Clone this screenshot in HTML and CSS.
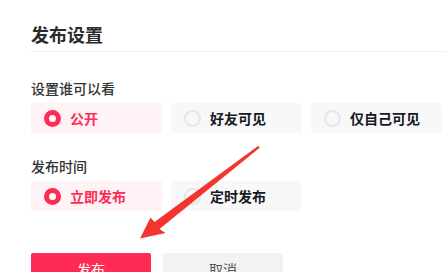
FILE: index.html
```html
<!DOCTYPE html>
<html lang="zh-CN">
<head>
    <meta charset="UTF-8">
    <meta name="viewport" content="width=device-width, initial-scale=1.0">
    <title>发布设置</title>
    <link rel="stylesheet" href="styles.css">
</head>
<body>
    <div class="page">
        <h2 class="title">发布设置</h2>

        <div class="section">
            <div class="label">设置谁可以看</div>
            <div class="options">
                <div class="option checked"><span class="radio"></span>公开</div>
                <div class="option"><span class="radio"></span>好友可见</div>
                <div class="option"><span class="radio"></span>仅自己可见</div>
            </div>
        </div>

        <div class="section">
            <div class="label">发布时间</div>
            <div class="options">
                <div class="option checked"><span class="radio"></span>立即发布</div>
                <div class="option"><span class="radio"></span>定时发布</div>
            </div>
        </div>

        <div class="actions">
            <button class="btn primary">发布</button>
            <button class="btn">取消</button>
        </div>

        <!-- 标注箭头 -->
        <svg class="arrow" width="446" height="272" viewBox="0 0 446 272">
            <polygon points="258,146 260,147.5 159.5,229 165.5,233 140,238.5 150.5,217.5 154.5,222" fill="#f2362f"/>
        </svg>
    </div>
</body>
</html>
```

FILE: styles.css
```css
body {
    margin: 0;
    background: #fff;
    font-family: "Noto Sans CJK SC", "Noto Sans", sans-serif;
    color: #161823;
    overflow: hidden;
}
.page {
    position: relative;
    height: 272px;
    padding-left: 31px;
}
.title {
    margin: 0;
    padding: 22px 0 5px;
    font-size: 18px;
    line-height: 24px;
    font-weight: 700;
    color: #2b2b2b;
    border-bottom: 1px solid #f0f0f2;
}
.section {
    margin-top: 26px;
}
.section + .section {
    margin-top: 23px;
}
.label {
    font-size: 14px;
    line-height: 20px;
    font-weight: 500;
    color: #333;
    margin-bottom: 5px;
}
.options {
    display: grid;
    grid-template-columns: repeat(3, 131px);
    gap: 9px;
}
.option {
    display: flex;
    align-items: center;
    gap: 9px;
    height: 30px;
    padding-left: 13px;
    background: #f8f8f8;
    border-radius: 2px;
    font-size: 14px;
    font-weight: 600;
    color: #161823;
}
.radio {
    width: 17px;
    height: 17px;
    box-sizing: border-box;
    border-radius: 50%;
    border: 2px solid #e6e6e6;
    background: #f8f8f8;
}
.option.checked {
    background: #fff3f5;
    color: #fe2c55;
}
.option.checked .radio {
    border: 5px solid #fe2c55;
    background: #fff;
}
.actions {
    display: flex;
    gap: 12px;
    margin-top: 42px;
}
.btn {
    width: 120px;
    height: 32px;
    border: none;
    border-radius: 2px;
    background: #f2f2f4;
    color: #555;
    font-family: inherit;
    font-size: 14px;
}
.btn.primary {
    background: #fe2c55;
    color: #fff;
}
.arrow {
    position: absolute;
    left: 0;
    top: 0;
    pointer-events: none;
}
```
